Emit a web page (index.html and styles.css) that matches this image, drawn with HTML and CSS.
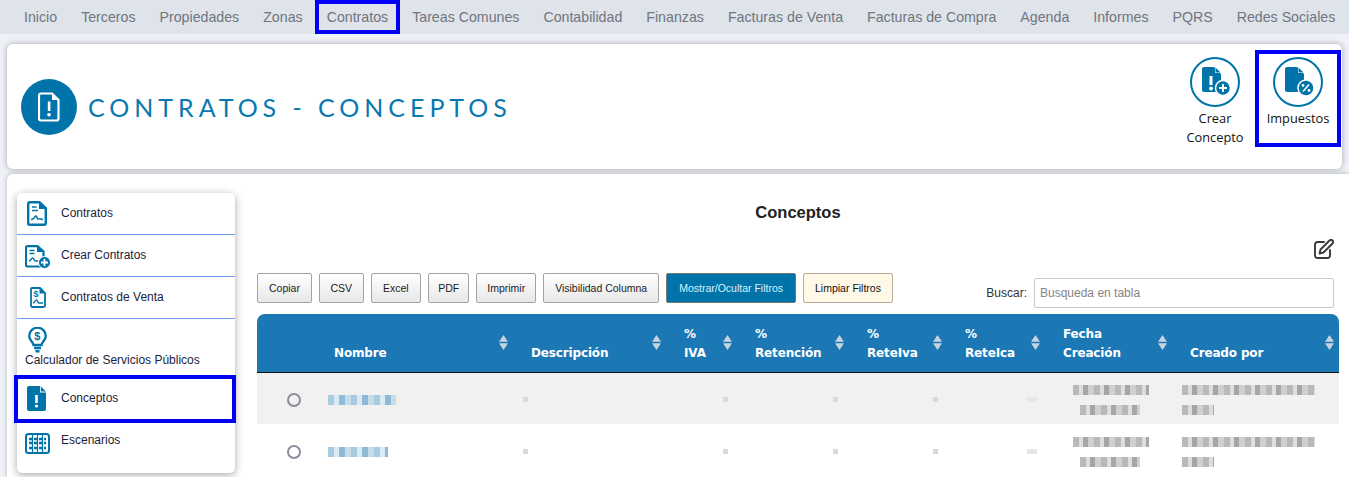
FILE: index.html
```html
<!DOCTYPE html>
<html lang="es">
<head>
<meta charset="utf-8">
<title>Contratos - Conceptos</title>
<link rel="stylesheet" href="styles.css">
</head>
<body>
<nav class="topnav">
  <a>Inicio</a><a>Terceros</a><a>Propiedades</a><a>Zonas</a><a class="mark">Contratos</a><a>Tareas Comunes</a><a>Contabilidad</a><a>Finanzas</a><a>Facturas de Venta</a><a>Facturas de Compra</a><a>Agenda</a><a>Informes</a><a>PQRS</a><a>Redes Sociales</a>
</nav>
<header class="headcard">
  <div class="headicon">
    <svg width="22" height="30" viewBox="0 0 22 30"><path d="M3 1.500h11l6.500 6.500v18.500a2 2 0 0 1-2 2H3a2 2 0 0 1-2-2v-23a2 2 0 0 1 2-2z" fill="none" stroke="#fff" stroke-width="2.200"/><path d="M14 1v7h7" fill="#fff"/><rect x="9.800" y="9.500" width="2.600" height="9.500" fill="#fff"/><circle cx="11" cy="22.800" r="1.800" fill="#fff"/></svg>
  </div>
  <h1 class="headtitle">CONTRATOS - CONCEPTOS</h1>
  <div class="actions">
    <a class="action create">
      <span class="ring"><svg width="30" height="30" viewBox="0 0 30 30"><path d="M2 0h10l7 7v16a2 2 0 0 1-2 2H2a2 2 0 0 1-2-2V2a2 2 0 0 1 2-2z" fill="#0074a8"/><path d="M13 0l6 6h-6z" fill="#fff"/><path d="M13.500 .5l5 5h-5z" fill="#0074a8"/><rect x="7.500" y="9" width="3" height="9" fill="#fff"/><circle cx="9" cy="21.500" r="1.900" fill="#fff"/><circle cx="21" cy="21" r="7.500" fill="#0074a8" stroke="#fff" stroke-width="1.500"/><path d="M21 17v8M17 21h8" stroke="#fff" stroke-width="1.800"/></svg></span>
      <span>Crear<br>Concepto</span>
    </a>
    <a class="action mark">
      <span class="ring"><svg width="30" height="30" viewBox="0 0 30 30"><path d="M2 0h10l7 7v16a2 2 0 0 1-2 2H2a2 2 0 0 1-2-2V2a2 2 0 0 1 2-2z" fill="#0074a8"/><path d="M13 0l6 6h-6z" fill="#fff"/><path d="M13.500 .5l5 5h-5z" fill="#0074a8"/><circle cx="21" cy="21" r="8" fill="#0074a8" stroke="#fff" stroke-width="1.500"/><path d="M18 24.500l6-7" stroke="#fff" stroke-width="1.500"/><circle cx="18" cy="18.500" r="1.400" fill="#fff"/><circle cx="24" cy="23.500" r="1.400" fill="#fff"/></svg></span>
      <span>Impuestos</span>
    </a>
  </div>
</header>
<div class="workspace">
  <aside class="sidebar">
    <a class="sideitem">
      <svg class="sideicon" width="20" height="25" viewBox="0 0 20 25"><path d="M2.500 1.200h10l6.300 6v15.300a1.300 1.300 0 0 1-1.300 1.300h-15a1.300 1.300 0 0 1-1.300-1.300v-20a1.300 1.300 0 0 1 1.300-1.300z" fill="none" stroke="#0074a8" stroke-width="2.400"/><path d="M12 1v7h7" fill="#0074a8"/><path d="M5 6h4.500M5 9.500h6" stroke="#0074a8" stroke-width="1.500"/><path d="M4 18.500c2 0 2.500-.5 3.500-2 1-1.700 1.700-2 2.300-.5.500 1.800 1.200 2.500 2.200 1.800s2 .7 4 .7" fill="none" stroke="#0074a8" stroke-width="1.500"/></svg>
      <span>Contratos</span>
    </a>
    <a class="sideitem">
      <svg class="sideicon wide" width="26" height="24" viewBox="0 0 26 24"><path d="M2.500 1.100h10l6 5.500V20a1.500 1.500 0 0 1-1.500 1.500H2.500A1.500 1.500 0 0 1 1 20V2.500A1.500 1.500 0 0 1 2.500 1.100z" fill="none" stroke="#0074a8" stroke-width="2.200"/><path d="M12 1v6h6" fill="#0074a8"/><path d="M4.500 5.500h5M4.500 8.500h5" stroke="#0074a8" stroke-width="1.500"/><path d="M4 16c2 0 2-3 3.500-3s1.500 3 3 3h3" fill="none" stroke="#0074a8" stroke-width="1.500"/><circle cx="19.500" cy="17.500" r="6" fill="#0074a8" stroke="#fff"/><path d="M19.500 14v7M16 17.500h7" stroke="#fff" stroke-width="1.800"/></svg>
      <span>Crear Contratos</span>
    </a>
    <a class="sideitem">
      <svg class="sideicon small" width="16" height="21" viewBox="0 0 16 21"><path d="M2 1h8l5 5v12.500a1.500 1.500 0 0 1-1.500 1.500h-11.500A1.500 1.500 0 0 1 1 18.500V2A1 1 0 0 1 2 1z" fill="none" stroke="#0074a8" stroke-width="1.800"/><path d="M9.500 1v5.500H15" fill="#0074a8"/><path d="M3 16c2 0 2-3 3.500-3s1 3 2.500 3h4" fill="none" stroke="#0074a8" stroke-width="1.300"/><text x="3.500" y="10" class="dollar">$</text></svg>
      <span>Contratos de Venta</span>
    </a>
    <a class="sideitem stacked">
      <svg class="bulb" width="19" height="26" viewBox="0 0 19 26"><path d="M5.500 18c0-2.500-4.300-4.500-4.300-9a8.300 8.300 0 0 1 16.600 0c0 4.500-4.300 6.500-4.300 9z" fill="none" stroke="#0074a8" stroke-width="2.300"/><path d="M6 21h7M7.500 24.300h4" stroke="#0074a8" stroke-width="2.400"/><text x="6.200" y="13" class="dollar big">$</text></svg>
      <span>Calculador de Servicios Públicos</span>
    </a>
    <a class="sideitem mark plain">
      <svg class="sideicon" width="20" height="25" viewBox="0 0 20 25"><path d="M2 0h11l6 6v17a2 2 0 0 1-2 2H2a2 2 0 0 1-2-2V2a2 2 0 0 1 2-2z" fill="#0074a8"/><path d="M13 0l6.500 6.500H13z" fill="#fff"/><path d="M13.800 .5l5 5h-5z" fill="#0074a8"/><rect x="8.200" y="9" width="2.600" height="8" fill="#fff"/><circle cx="9.500" cy="20" r="1.600" fill="#fff"/></svg>
      <span>Conceptos</span>
    </a>
    <a class="sideitem plain">
      <svg class="sideicon wide" width="25" height="21" viewBox="0 0 25 21"><rect x="1" y="1" width="23" height="19" rx="2.500" fill="none" stroke="#0074a8" stroke-width="2"/><path d="M7.500 1v19M12.500 1v19M17.500 1v19" stroke="#0074a8" stroke-width="1.200"/><path d="M4 6h17M4 10h17M4 15h17" stroke="#0074a8" stroke-width="2.600" stroke-dasharray="3 2"/></svg>
      <span>Escenarios</span>
    </a>
  </aside>
  <main class="content">
    <h2 class="content-title">Conceptos</h2>
    <div class="edit-row">
      <svg width="20" height="20" viewBox="0 0 20 20" fill="none" stroke="#3a3a3a" stroke-width="1.900" stroke-linecap="round" stroke-linejoin="round"><path d="M10 3H3.500A2.500 2.500 0 0 0 1 5.500v11A2.500 2.500 0 0 0 3.500 19h10a2.500 2.500 0 0 0 2.500-2.500V11"/><path d="M15.500 1.500a1.900 1.900 0 0 1 3 3L9.500 13.500l-4 1 1-4z"/></svg>
    </div>
    <div class="tools">
      <div class="btns">
        <button class="btn">Copiar</button>
        <button class="btn snug">CSV</button>
        <button class="btn roomy">Excel</button>
        <button class="btn tight">PDF</button>
        <button class="btn medium">Imprimir</button>
        <button class="btn cols">Visibilidad Columna</button>
        <button class="btn primary">Mostrar/Ocultar Filtros</button>
        <button class="btn warm">Limpiar Filtros</button>
      </div>
      <label class="search">Buscar:<input type="text" placeholder="Busqueda en tabla"></label>
    </div>
    <table class="grid">
      <colgroup><col class="c0"><col class="c1"><col class="c2"><col class="c3"><col class="c4"><col class="c5"><col class="c6"><col class="c7"><col class="c8"></colgroup>
      <thead>
        <tr>
          <th></th>
          <th><span class="th-in">Nombre</span></th>
          <th><span class="th-in">Descripción</span></th>
          <th><span class="th-in">%<br>IVA</span></th>
          <th><span class="th-in">%<br>Retención</span></th>
          <th><span class="th-in">%<br>ReteIva</span></th>
          <th><span class="th-in">%<br>ReteIca</span></th>
          <th><span class="th-in">Fecha<br>Creación</span></th>
          <th><span class="th-in">Creado por</span></th>
        </tr>
      </thead>
      <tbody>
        <tr>
          <td class="radio-cell"><span class="radio"></span></td>
          <td><span class="mosaic blue n1"></span></td>
          <td class="d2"><span class="mosaic dot"></span></td>
          <td class="d3"><span class="mosaic dot"></span></td>
          <td class="d4"><span class="mosaic dot"></span></td>
          <td class="d5"><span class="mosaic dot"></span></td>
          <td class="d6"><span class="mosaic dot lg"></span></td>
          <td><span class="mosaic date"></span><span class="mosaic time"></span></td>
          <td><span class="mosaic user"></span><span class="mosaic user2"></span></td>
        </tr>
        <tr>
          <td class="radio-cell"><span class="radio"></span></td>
          <td><span class="mosaic blue n2"></span></td>
          <td class="d2"><span class="mosaic dot"></span></td>
          <td class="d3"><span class="mosaic dot"></span></td>
          <td class="d4"><span class="mosaic dot"></span></td>
          <td class="d5"><span class="mosaic dot"></span></td>
          <td class="d6"><span class="mosaic dot lg"></span></td>
          <td><span class="mosaic date"></span><span class="mosaic time"></span></td>
          <td><span class="mosaic user"></span><span class="mosaic user2"></span></td>
        </tr>
      </tbody>
    </table>
  </main>
</div>
</body>
</html>
```
FILE: styles.css
```css
* { box-sizing: border-box; }
html, body { margin: 0; height: 477px; overflow: hidden; }
body { background: #eef1f6; font-family: "Liberation Sans", Arial, sans-serif; color: #222; }
.mark { box-shadow: inset 0 0 0 4px #0000f5; }

.topnav { display: flex; height: 34px; padding-left: 12px; background: #dfe3ea; }
.topnav a { display: flex; align-items: center; padding: 0 12px; font-size: 14.200px; color: #6f7680; white-space: nowrap; }

.headcard { display: flex; align-items: center; height: 125px; margin: 10px 7px 0; padding: 0 1px 0 14px; background: #fff; border-radius: 6px; box-shadow: 0 0 6px rgba(0,0,0,.3); }
.headicon { display: flex; align-items: center; justify-content: center; width: 56px; height: 56px; border-radius: 50%; background: #0074a8; }
.headtitle { margin: 0 0 0 11px; font: 400 25px Lato, sans-serif; letter-spacing: 4.950px; color: #0a78b0; }
.actions { display: flex; align-items: flex-start; margin-left: auto; align-self: flex-start; padding-top: 6px; }
.action { display: flex; flex-direction: column; align-items: center; width: 86px; height: 97px; padding-top: 7px; gap: 2px; font: 12.800px/19px "Open Sans", sans-serif; color: #111; text-align: center; }
.action.create { width: 80px; }
.ring { flex: none; display: flex; align-items: center; justify-content: center; width: 50px; height: 50px; padding-left: 3px; border: 2px solid #0074a8; border-radius: 50%; background: #fff; }

.workspace { display: flex; height: 303px; margin: 5px 0 0 7px; padding: 19px 10px 0 10px; background: #fff; box-shadow: 0 0 5px rgba(0,0,0,.25); border-radius: 6px 0 0 0; }
.sidebar { flex: none; align-self: flex-start; width: 218px; height: 280px; background: #fff; border-radius: 5px; box-shadow: 0 2px 8px rgba(0,0,0,.35); font-size: 12px; color: #1d1d3b; }
.sideitem { display: flex; align-items: center; height: 42px; padding: 0 0 2px 44px; border-bottom: 1px solid #6f9ef0; position: relative; }
.sideicon { position: absolute; left: 10px; top: 8px; }
.sideicon.wide { left: 8px; top: 10px; }
.sideicon.small { left: 13px; top: 10px; }
.sideitem.plain { border-bottom: 0; }
.sideitem.stacked { display: block; height: 56px; padding: 8px 0 0 8px; border-bottom: 0; }
.sideitem.stacked span { display: block; margin-top: 0; line-height: 14px; }
.bulb { display: block; margin-left: 3px; }
.sideitem.mark { height: 48px; margin: 0 -1px 0 -3px; padding: 0 0 3px 47px; }
.sideitem.mark .sideicon { left: 13px; top: 11px; }
.sideitem.mark + .sideitem { height: 36px; padding-bottom: 2px; }
.dollar { font: 700 9px "Liberation Sans", sans-serif; fill: #0074a8; }
.dollar.big { font-size: 11px; }

.content { flex: 1; min-width: 0; padding-left: 22px; }
.content-title { margin: 0; padding-top: 11px; height: 46px; font-size: 16.500px; line-height: 17px; text-align: center; color: #222; font-weight: 700; }
.edit-row { display: flex; justify-content: flex-end; height: 34px; padding-right: 5px; }
.tools { display: flex; justify-content: space-between; height: 41px; }
.btns { display: flex; gap: 7px; height: 30px; }
.btn { height: 30px; padding: 0 11px; border: 1px solid #a3a3a3; border-radius: 2px; background: linear-gradient(#fff, #e7e7e7); font: 10.500px "Liberation Sans", sans-serif; color: #222; white-space: nowrap; }
.btn.snug { padding: 0 10.500px; }
.btn.roomy { padding: 0 11.500px; }
.btn.tight { padding: 0 9px; }
.btn.medium { padding: 0 10px; }
.btn.cols { padding: 0 11px; }
.btn.primary { padding: 0 12px; background: #0074a8; border-color: #777; color: #d9f1ff; }
.btn.warm { background: #fff8e6; border-color: #b5ad98; color: #111; }
.search { display: flex; align-items: center; gap: 7px; height: 30px; margin: 5px 5px 0 0; font-size: 12px; color: #333; }
.search input { width: 300px; height: 30px; padding: 0 5px; border: 1px solid #c8c8c8; border-radius: 2px; font: 12px "Liberation Sans", sans-serif; color: #333; }
.search input::placeholder { color: #858585; }

.grid { width: 1082px; border-collapse: collapse; table-layout: fixed; }
.c0 { width: 63px; } .c1 { width: 197px; } .c2 { width: 153px; } .c3 { width: 71px; } .c4 { width: 112px; } .c5 { width: 98px; } .c6 { width: 98px; } .c7 { width: 127px; } .c8 { width: 163px; }
.grid thead th { height: 58px; padding: 0; background: #1c78b5; border-bottom: 1px solid #111; vertical-align: top; text-align: left; color: #fff; font: 700 12px/19px "DejaVu Sans", Verdana, sans-serif; letter-spacing: -.15px; }
.grid thead th:first-child { border-radius: 8px 0 0 0; }
.grid thead th:last-child { border-radius: 0 8px 0 0; }
.th-in { display: block; position: relative; height: 57px; padding: 30px 20px 0 14px; }
.th-in:has(br) { padding-top: 11px; }
.th-in::after { content: ""; position: absolute; right: 9px; top: 21px; width: 9px; height: 15px; background: #c6d3de; clip-path: polygon(50% 0, 100% 45%, 0 45%, 0 55%, 100% 55%, 50% 100%, 0 55%, 0 45%); }
.grid thead th:last-child .th-in::after { right: 5px; }
.grid td { height: 52px; padding: 3px 0 0; vertical-align: middle; }
.grid tbody tr:first-child td { background: #f1f1f1; }
.radio-cell { padding-left: 30px !important; }
.d2 { padding-left: 6px !important; }
.d3 { padding-left: 53px !important; }
.d4 { padding-left: 92px !important; }
.d5 { padding-left: 80px !important; }
.d6 { padding-left: 76px !important; }
.radio { display: block; width: 14px; height: 14px; border: 2px solid #8d8d9b; border-radius: 50%; }
.mosaic { display: block; height: 10px; filter: blur(.5px); background: repeating-linear-gradient(90deg, #b9b9b9 0 6px, #dddddd 6px 10px, #a5a5aa 10px 15px, #cfcfcf 15px 21px); }
.mosaic.blue { background: repeating-linear-gradient(90deg, #a9cbe0 0 6px, #dcebf3 6px 11px, #8fbad6 11px 17px, #c5dcea 17px 23px); height: 10px; }
.n1 { width: 68px; margin-left: 8px; }
.n2 { width: 60px; margin-left: 8px; }
.dot { width: 5px; height: 5px; background: #d8d8d8; filter: none; }
.dot.lg { width: 10px; background: #e6e6e6; }
.date { width: 76px; margin: 0 0 10px 24px; }
.time { width: 60px; margin: 0 0 0 31px; }
.user { width: 133px; margin: 0 0 10px 6px; }
.user2 { width: 32px; margin-left: 6px; }
```
